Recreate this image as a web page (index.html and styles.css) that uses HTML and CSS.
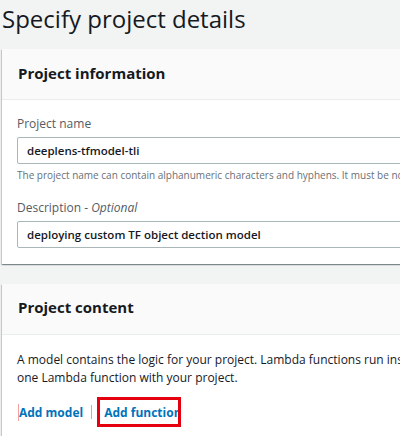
FILE: index.html
```html
<!DOCTYPE html>
<html>
<head>
<meta charset="utf-8">
<link rel="stylesheet" href="styles.css">
</head>
<body>
<div class="page">
  <h1 class="title">Specify project details</h1>
  <section class="card card-info">
    <div class="card-header"><h2>Project information</h2></div>
    <div class="card-body">
      <div class="field">
        <label class="label">Project name</label>
        <div class="input">deeplens-tfmodel-tli</div>
        <div class="hint">The project name can contain alphanumeric characters and hyphens. It must be no longer than 100 characters.</div>
      </div>
      <div class="field field-desc">
        <label class="label">Description - <i>Optional</i></label>
        <div class="input">deploying custom TF object dection model</div>
      </div>
    </div>
  </section>
  <section class="card card-content">
    <div class="card-header"><h2>Project content</h2></div>
    <div class="card-body">
      <p class="para">A model contains the logic for your project. Lambda functions run instructions on the device. You can add one model and<br>one Lambda function with your project.</p>
      <div class="links">
        <a class="link link-model">Add model</a>
        <span class="sep"></span>
        <span class="highlight"><a class="link link-fn">Add function</a></span>
      </div>
    </div>
  </section>
</div>
</body>
</html>
```
FILE: styles.css
```css
html, body {
  margin: 0;
  padding: 0;
  background: #f2f3f3;
  overflow: hidden;
}
.page {
  width: 400px;
  height: 436px;
  overflow: hidden;
  font-family: "Open Sans", "Liberation Sans", sans-serif;
  color: #16191f;
}
.title {
  margin: 0;
  padding: 4px 0 0 2px;
  height: 46px;
  box-sizing: border-box;
  font-size: 24px;
  font-weight: 400;
  line-height: 30px;
  white-space: nowrap;
  color: #16191f;
}
.card {
  margin-left: 2px;
  width: 420px;
  background: #fff;
  box-shadow: 0 1px 1px 0 rgba(0,28,36,0.3), 1px 1px 1px 0 rgba(0,28,36,0.15), -1px 1px 1px 0 rgba(0,28,36,0.15);
}
.card-info {
  margin-top: 3px;
}
.card-content {
  margin-top: 20px;
}
.card-header {
  background: #fafafa;
  border-bottom: 1px solid #eaeded;
  padding: 0 16px 2px;
  height: 51px;
  box-sizing: border-box;
  display: flex;
  align-items: center;
}
.card-content .card-header {
  padding-bottom: 5px;
}
.card-header h2 {
  margin: 0;
  font-size: 15px;
  font-weight: 700;
  white-space: nowrap;
}
.card-body {
  padding: 14px 0 16px 15px;
}
.label {
  display: block;
  font-size: 12px;
  color: #545b64;
  line-height: 20px;
  margin-bottom: 3px;
  white-space: nowrap;
}
.label i {
  font-style: italic;
}
.input {
  height: 27px;
  box-sizing: border-box;
  border: 1px solid #aab7b8;
  border-radius: 2px;
  padding: 0 9px;
  display: flex;
  align-items: center;
  font-size: 11.5px;
  font-weight: 600;
  color: #16191f;
  white-space: nowrap;
}
.hint {
  font-size: 10px;
  color: #687078;
  line-height: 18px;
  margin-top: 2px;
  white-space: nowrap;
}
.field-desc {
  margin-top: 14px;
}
.card-content .card-body {
  padding-top: 16px;
  padding-bottom: 30px;
}
.para {
  margin: 0;
  font-size: 12px;
  line-height: 18px;
  white-space: nowrap;
  color: #16191f;
}
.links {
  margin-top: 10px;
  display: flex;
  align-items: center;
  height: 30px;
  margin-left: 1px;
}
.link {
  color: #0073bb;
  font-size: 12px;
  font-weight: 700;
  white-space: nowrap;
}
.link-model {
  border-left: 1px solid #f4a0a0;
  padding-left: 0;
}
.sep {
  width: 1px;
  height: 14px;
  background: #aab7b8;
  margin: 0 5px 0 8px;
}
.highlight {
  display: flex;
  align-items: center;
  width: 84px;
  height: 30px;
  flex-shrink: 0;
  box-sizing: border-box;
  border: 3px solid #e4000f;
  padding-left: 4px;
  overflow: hidden;
}
```
